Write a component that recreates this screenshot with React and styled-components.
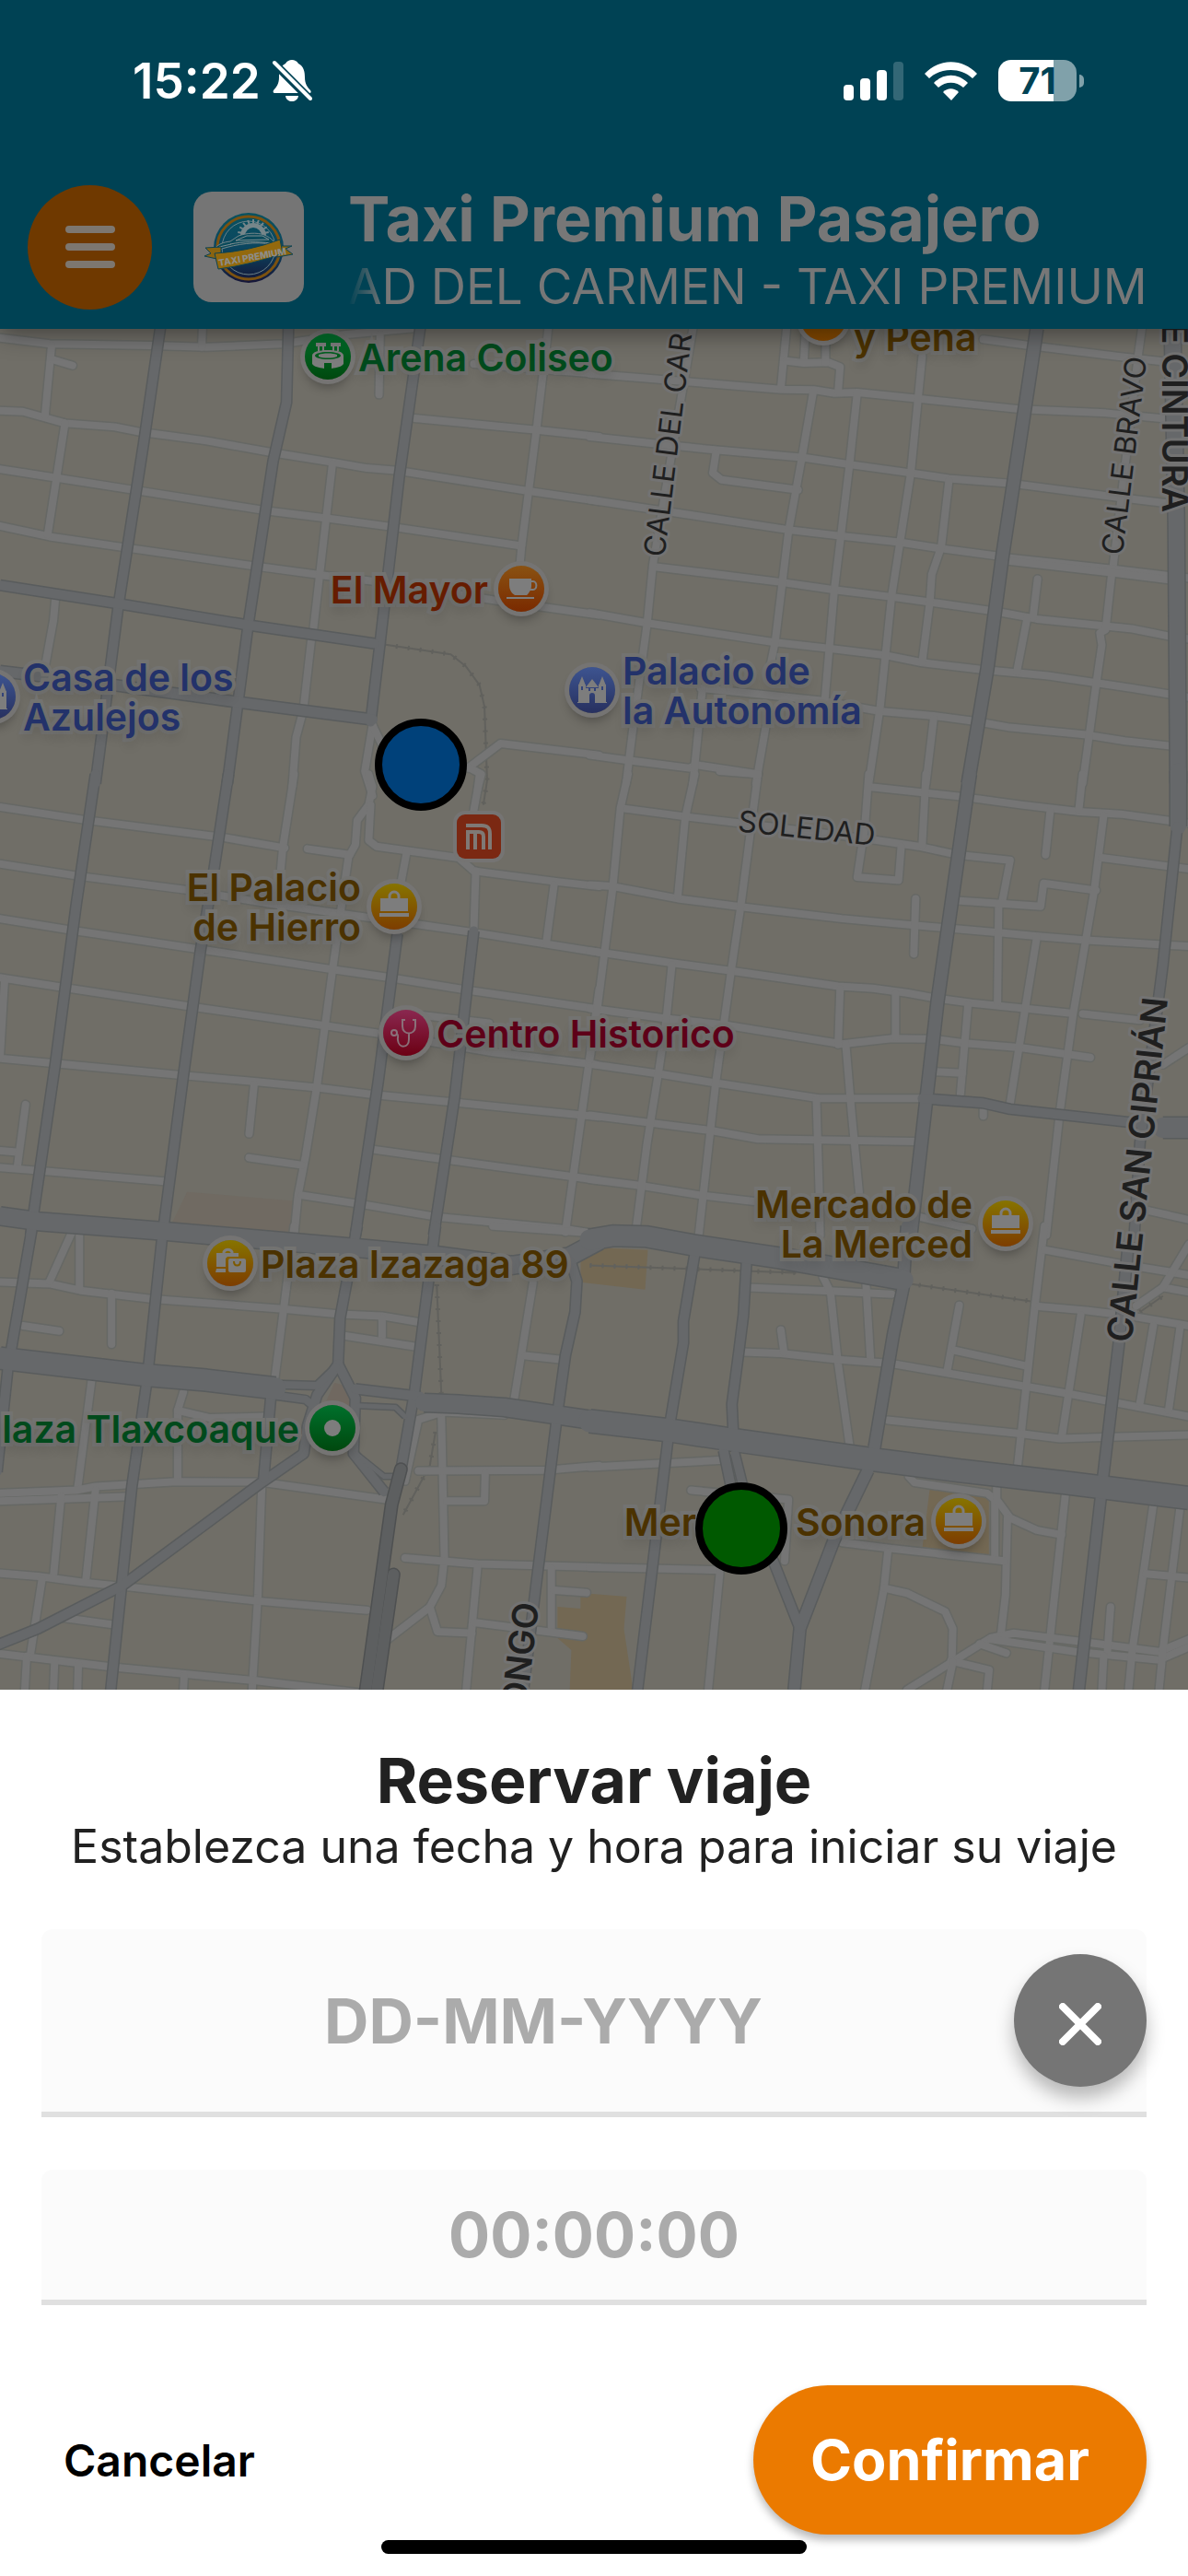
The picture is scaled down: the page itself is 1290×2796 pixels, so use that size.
import React from "react";
import styled, { createGlobalStyle } from "styled-components";

/* ---------- map data ---------- */

// every sheet has its own drawing grid, 1568 units wide for 650px
const toMap = (sheet, points) =>
  points
    .split(" ")
    .map(pair => {
      const [x, y] = pair.split(",").map(Number);
      return `${Math.round((sheet.x + x / 2.412) * 10) / 10},${Math.round((sheet.y + y / 3) * 10) / 10}`;
    })
    .join(" ");

const sheets = [
  {
    x: 0,
    y: 350,
    streets: [
      "0,50 130,70 400,75 540,80 740,70 900,40 1090,18",
      "0,287 60,290 170,328 300,340 370,357 540,385 720,425 880,457 960,474 1040,482 1380,548 1568,582",
      "0,477 350,545 700,613 860,638 1030,666 1365,727",
      "0,662 130,697 340,735 680,795 860,825 1000,845 1300,905 1568,952",
      "135,75 118,300",
      "135,120 190,140",
      "170,328 125,690",
      "145,900 140,970 118,1120",
      "530,20 528,80",
      "870,460 820,1000",
      "815,1030 795,1250",
      "790,1280 775,1350 765,1510",
      "995,40 992,235",
      "1435,20 1405,340 1365,730 1360,800",
      "1085,312 1405,350 1568,372",
      "1240,135 1568,168",
      "975,1310 955,1460 975,1540",
      "975,1310 1010,1400",
      "1225,1450 1310,1370 1568,1408",
      "1230,1450 1260,1470 1250,1520"
    ],
    avenues: [
      ["420,15 375,400 310,920 250,1500", 11],
      ["755,15 750,260 715,450 650,980 595,1500", 11],
      ["1100,15 1045,500 995,1040 970,1300", 11],
      ["0,855 310,915 650,985 980,1045", 11],
      ["0,1135 240,1170 620,1235 975,1292", 12]
    ],
    rails: ["1005,1048 1180,1080 1220,1120 1255,1180 1268,1250 1275,1490 1265,1570"]
  },
  {
    x: 640,
    y: 350,
    streets: [
      "0,167 130,180 500,218 590,220 640,230 700,228 860,248 1130,283 1350,295 1520,315",
      "0,372 290,410 560,440 680,462 840,490 940,508 1110,525 1400,572 1520,590",
      "0,577 520,675 660,695 810,715 915,735 1080,762",
      "170,795 500,845 640,870 790,893 890,910 1060,940 1170,965 1420,997 1520,1022 1568,1030",
      "0,945 150,978 480,1040 620,1060 770,1082 870,1107 1030,1130 1200,1150 1420,1190 1568,1220",
      "290,1190 600,1230 760,1265 900,1280 1010,1298 1100,1318 1300,1342 1400,1362 1520,1378",
      "0,1408 100,1425 260,1450 280,1440 440,1470",
      "330,425 322,490 345,512 545,545",
      "515,20 500,215",
      "565,20 560,130",
      "515,125 560,132 625,130 655,145 650,225",
      "617,60 617,130",
      "585,225 555,440 520,680 485,1040 470,1130",
      "700,230 680,460 640,870 615,1230",
      "870,110 840,490 790,890 760,1250 730,1500",
      "940,515 920,730 895,820 890,910 870,1105",
      "900,1290 880,1500",
      "270,20 165,790 150,980 115,1300 95,1500",
      "295,1190 270,1500",
      "460,1320 435,1500",
      "1030,55 1150,75 1380,110 1520,130",
      "1445,20 1435,110 1370,790 1365,830 1350,1000 1335,1010 1340,1050 1325,1180 1290,1500",
      "1172,835 1160,960",
      "1145,960 1118,1135",
      "1095,766 1380,804 1568,832",
      "1095,776 1380,816 1520,838"
    ],
    avenues: [
      ["1170,20 1140,270 1080,760 1040,1130 990,1500", 14],
      ["1525,20 1535,650 1540,1500", 18]
    ],
    rails: []
  },
  {
    x: 0,
    y: 840,
    streets: [
      "0,107 230,150 580,205 745,240",
      "0,292 210,332 480,375 700,420 900,455 1100,490 1240,515 1568,580",
      "0,470 200,510 540,573 870,635 1010,660 1220,702 1568,765",
      "0,662 180,697 510,758 850,818 1000,845 1290,905 1560,945",
      "1110,785 1280,810",
      "0,925 150,942 480,980 660,1000 830,1020 980,1043 1190,1068 1568,1115",
      "0,1225 45,1230",
      "67,1075 45,1280",
      "0,1280 100,1290 430,1325",
      "770,0 740,240 735,310",
      "805,243 915,262",
      "965,0 975,40 965,100 935,150 930,230 912,270 905,330 870,640 830,1010 800,1240 780,1370 770,1500",
      "970,100 965,215 985,235 1200,272 1240,315 1460,350 1568,365",
      "1065,250 1050,350",
      "1255,0 1250,50 1238,130",
      "1245,315 1240,510",
      "1450,360 1430,545",
      "12,670 0,920",
      "665,1010 652,1170",
      "652,1248 790,1272",
      "790,1370 950,1400 1140,1440 1480,1480 1540,1492",
      "980,1222 1160,1253 1500,1310 1568,1322",
      "1568,700 1540,950 1500,1310 1480,1490"
    ],
    avenues: [
      ["250,0 200,420 145,940 90,1410 80,1500", 11],
      ["598,0 560,310 525,570 480,980 430,1455 425,1500", 11],
      ["1040,520 990,1000 930,1500", 11],
      ["1240,510 1190,1050 1135,1500", 11]
    ],
    rails: []
  },
  {
    x: 640,
    y: 840,
    streets: [
      "90,112 250,138 400,160 600,190 750,215 860,235 960,262 1100,280 1080,410",
      "0,360 60,365 230,405 400,432 660,470 790,485 930,500 1070,515 1180,528 1300,540 1500,555 1568,560",
      "0,575 40,582 220,615 370,640 650,690 740,697 830,712 910,730 1000,745 1260,778",
      "0,762 200,795 350,815 660,878 790,860 900,862 980,875 1130,890 1310,922",
      "0,943 180,975 330,1005 600,1055 870,1055",
      "0,1110 160,1135 320,1160 440,1187 850,1195",
      "0,1318 140,1340 290,1370 430,1390",
      "735,42 970,73 1130,100 1280,122 1390,130 1568,160",
      "100,0 80,110 60,370 20,760 0,930",
      "275,0 250,140 230,400",
      "215,620 200,800 180,970 150,1200 120,1490",
      "440,0 395,430 370,640 330,1000 285,1500",
      "340,-10 440,0",
      "730,0 720,170 700,335 808,345 815,235",
      "880,0 870,230",
      "853,405 848,585",
      "655,700 650,880",
      "800,715 800,855",
      "670,880 685,1100 705,1360",
      "593,1060 600,1340 603,1500",
      "1070,430 1067,740",
      "970,412 1180,430 1188,355 1325,378",
      "1205,120 1193,262",
      "1290,0 1280,115",
      "1345,135 1320,380 1265,780 1230,1100 1195,1500",
      "1340,272 1568,308",
      "1170,530 1140,760 1100,1070",
      "990,750 970,1040",
      "900,968 975,973",
      "1030,1085 1030,1112",
      "1290,780 1440,800",
      "1500,945 1568,890",
      "860,1440 1000,1480",
      "1460,1420 1568,1450"
    ],
    avenues: [
      ["995,0 910,740 840,1500", 14],
      ["1540,-10 1540,170", 18],
      ["1538,170 1500,620 1440,1200 1425,1500", 11],
      ["870,1055 1030,1070 1100,1090 1430,1135", 11],
      ["1500,1150 1600,1150", 23]
    ],
    rails: []
  },
  {
    x: 0,
    y: 1330,
    streets: [
      "0,182 130,188 210,210 400,238 740,270 890,287 1000,293 1095,313",
      "190,15 130,180",
      "208,15 208,205",
      "292,220 292,385",
      "60,325 155,342",
      "770,0 720,490",
      "1000,300 1000,360",
      "905,358 1085,392",
      "1395,185 1345,570",
      "1375,422 1470,435",
      "240,500 203,855",
      "480,540 465,600 465,830",
      "465,600 550,625 690,620",
      "0,870 200,860 250,848 460,832 680,833 1010,890",
      "0,895 340,880",
      "160,880 140,1140",
      "250,860 225,1150",
      "685,850 675,1200 660,1510",
      "0,1130 100,1140 220,1160 340,1175 670,1220 960,1250",
      "110,1150 80,1390",
      "165,1275 300,1298",
      "0,1392 290,1435 670,1480 950,1520",
      "70,1400 65,1510",
      "143,1415 140,1510",
      "205,1425 203,1510",
      "482,1465 480,1510",
      "1155,610 1163,1080 1155,1170 1125,1240 1010,1350",
      "1125,1240 1145,1320 1235,1325",
      "1095,797 1430,795 1568,780",
      "1270,805 1268,895 1170,895",
      "1060,1080 1250,1100 1568,1110",
      "1250,1110 1220,1510",
      "1443,1115 1443,1320",
      "1450,1185 1535,1193",
      "1240,1290 1525,1335",
      "1060,830 1095,630 1160,605 1320,615",
      "1290,0 1540,22"
    ],
    avenues: [
      ["85,0 20,470 -8,800", 11],
      ["425,30 385,500 345,850 290,1510", 11],
      ["935,0 890,300 885,450 830,550 805,650 795,740 690,830 320,1170 100,1310 -20,1370", 11],
      ["885,450 930,560 925,740 1005,865", 11],
      ["1140,0 1085,540 1050,790", 11],
      ["710,540 690,820", 11],
      ["700,515 830,520 880,460", 9],
      ["700,548 800,565 825,590", 9],
      ["930,530 1100,555", 11],
      ["940,585 1035,590 1060,620", 6],
      ["930,740 1005,815 1040,815", 6],
      ["1490,100 1510,180 1505,280 1480,420 1460,600 1400,1200 1370,1510", 11],
      ["0,-32 100,-15 430,17 920,70 1140,95 1340,128 1490,100 1568,48", 20],
      ["0,430 380,485 540,502 720,528", 24],
      ["1110,575 1200,580 1320,590 1568,635", 20]
    ],
    rails: ["1143,190 1155,545", "1140,670 1125,780 1055,940"]
  },
  {
    x: 640,
    y: 1330,
    streets: [
      "415,200 640,212 790,222",
      "610,165 630,215 650,450 680,715",
      "723,190 735,440",
      "400,410 500,415 650,435 790,448 930,478 1250,545 1568,620",
      "500,338 508,410",
      "967,258 935,475",
      "955,405 1140,455",
      "1190,0 1165,260 1120,780",
      "1190,78 1420,130 1568,160",
      "1175,262 1300,275 1400,290 1568,325",
      "1285,290 1235,690",
      "780,632 1120,675 1230,692 1340,688 1568,680",
      "1475,325 1440,575",
      "1545,330 1515,600",
      "1430,260 1500,200 1568,215",
      "1500,200 1568,60",
      "0,785 350,762",
      "265,860 520,890 510,1090",
      "835,815 850,835 1040,870 1060,890 1060,1080",
      "1065,845 1065,890 1100,950 1170,990 1235,1005",
      "1093,950 1088,1200 1075,1340",
      "1245,870 1190,1510",
      "660,1030 790,1050 1085,1090",
      "780,1060 770,1180 720,1510",
      "770,1178 830,1195 930,1255 950,1310 948,1410",
      "0,1110 340,1120",
      "340,1130 310,1510",
      "830,1510 1050,1340 1110,1325 1270,1350 1490,1385 1568,1345",
      "1050,1345 1270,1385 1490,1412 1568,1370",
      "1020,1360 1090,1390",
      "945,1415 1045,1445 1040,1510",
      "950,1420 935,1510",
      "1363,1240 1355,1380",
      "1475,905 1420,1380 1410,1510",
      "1545,915 1500,1380 1490,1510",
      "1455,1132 1568,1145",
      "1345,1400 1340,1510"
    ],
    avenues: [
      ["275,90 245,310 245,380 210,640 165,1100 125,1510", 11],
      ["410,120 402,290 390,410 372,580 375,660", 11],
      ["830,0 825,100 820,200 795,350 745,720", 13],
      ["728,795 640,1020 550,1310 535,1510", 13],
      ["350,730 370,850 480,1090 550,1310", 11],
      ["380,740 400,840 480,1090", 10],
      ["1410,50 1385,380 1345,800 1280,1510", 12],
      ["0,45 60,32 150,35 270,62 500,105 820,175", 23],
      ["0,635 210,665 370,695 740,760 960,795 1240,835 1568,885", 25]
    ],
    rails: ["0,128 540,152", "830,187 1155,245", "1440,280 1500,228"]
  }
];

const tunnels = ["435,1594 425,1632 396,1840", "427,1708 408,1840"];

const patches = [
  { color: "#706a62", points: "203,1293 322,1303 318,1340 184,1332" },
  { color: "#706860", points: "363,1500 380,1505 384,1540 345,1540" },
  { color: "#736853", points: "630,1362 640,1353 703,1356 700,1399 630,1391" },
  { color: "#736853", points: "1009,1615 1073,1625 1073,1687 1001,1678" },
  { color: "#736853", points: "605,1743 630,1745 630,1728 680,1732 677,1767 688,1840 618,1840 620,1790 605,1777" }
];

const streetNames = [
  { name: "CALLE DEL CAR", x: 721, y: 605, angle: -83 },
  { name: "CALLE BRAVO", x: 1218, y: 603, angle: -83 },
  { name: "SOLEDAD", x: 800, y: 902, angle: 6 },
  { name: "CALLE SAN CIPRIÁN", x: 1228, y: 1457, angle: -84, strong: true },
  { name: "E CINTURA", x: 1261, y: 556, angle: 90, strong: true, anchor: "end" },
  { name: "ONGO", x: 585, y: 1740, angle: -83, strong: true, anchor: "end" }
];

const tones = {
  green: { from: "#00702c", to: "#00480e", text: "#004a1c" },
  orange: { from: "#8a5212", to: "#7a2a00", text: "#661c00" },
  blue: { from: "#3d5490", to: "#27305f", text: "#23326a" },
  gold: { from: "#877400", to: "#7d3d00", text: "#4b3200" },
  amber: { from: "#8a5400", to: "#834700", text: "#4b3200" },
  red: { from: "#8a2850", to: "#6c0014", text: "#5e0018" }
};

// top is measured from the edge of the map
const places = [
  { lines: ["Arena Coliseo"], left: 356, top: 30, tone: "green", icon: "stadium" },
  { lines: ["y Peña"], left: 894, top: -3, tone: "amber", icon: "none", low: true },
  { lines: ["El Mayor"], left: 566, top: 282, tone: "orange", icon: "cup", before: true },
  { lines: ["Casa de los", "Azulejos"], left: -8, top: 399, tone: "blue", icon: "castle" },
  { lines: ["Palacio de", "la Autonomía"], left: 643, top: 392, tone: "blue", icon: "castle" },
  { lines: ["El Palacio", "de Hierro"], left: 428, top: 627, tone: "gold", icon: "bag", before: true },
  { lines: ["Centro Historico"], left: 441, top: 764, tone: "red", icon: "stethoscope" },
  { lines: ["Mercado de", "La Merced"], left: 1092, top: 971, tone: "gold", icon: "bag", before: true },
  { lines: ["Plaza Izazaga 89"], left: 250, top: 1014, tone: "gold", icon: "bags" },
  { lines: ["laza Tlaxcoaque"], left: 361, top: 1193, tone: "green", icon: "dot", before: true },
  { lines: ["Mercado Sonora"], left: 1041, top: 1294, tone: "gold", icon: "bag", before: true }
];

/* ---------- icons ---------- */

const placeIcons = {
  none: null,
  dot: <circle cx="25" cy="25" r="9" />,
  stadium: (
    <>
      <path d="M12 10h11v4h-2v5h-2v-5h-3v5h-2v-5h-2zM28 10h11v4h-2v5h-2v-5h-3v5h-2v-5h-2z" />
      <path fillRule="evenodd" d="M25 18c10 0 17 2 17 6v9c-2 3-7 4-13 5v-6h-8v6c-6-1-11-2-13-5v-9c0-4 7-6 17-6zm0 2c-8 0-14 2-14 4s6 4 14 4 14-2 14-4-6-4-14-4z" />
      <path d="M15 23c5-2 15-2 20 0v2c-5 2-15 2-20 0zM18 20l-2 6M32 20l2 6" />
    </>
  ),
  cup: (
    <>
      <path d="M12 14h24v8c0 4-3 8-5 10H18c-4-2-6-7-6-11z" />
      <path d="M35 17h3a3 4 0 0 1 0 9h-4" fill="none" stroke="#7d7d7d" strokeWidth="2" />
      <path d="M9 34h30v2H9z" />
    </>
  ),
  castle: (
    <>
      <path d="M10 20l4-10 4 10zM32 20l4-10 4 10zM18 22l7-9 7 9z" />
      <path fillRule="evenodd" d="M10 19h8v4h14v-4h8v19h1v1H28v-8a3 3 0 0 0-6 0v8H9v-1h1zm3 2v4h2v-4zm22 0v4h2v-4zM21 23v3h2v-3zm6 0v3h2v-3z" />
    </>
  ),
  bag: (
    <>
      <path d="M20 17v-3a5 5 0 0 1 10 0v3" fill="none" stroke="#7d7d7d" strokeWidth="3" />
      <path d="M10 16h30v14H10zM9 32h32v4H9z" />
    </>
  ),
  bags: (
    <>
      <path d="M18 15v-2a5 5 0 0 1 9 0v2" fill="none" stroke="#7d7d7d" strokeWidth="3" />
      <path d="M10 14h24v4H22l-2 2v9H10zM10 31h10v4H9z" />
      <rect x="23" y="20" width="19" height="15" rx="2" />
      <path d="M29 23c0 6 7 6 7 0" fill="none" stroke="#7d5a00" strokeWidth="2" />
    </>
  ),
  stethoscope: (
    <g fill="none" stroke="#8a7079" strokeWidth="2">
      <path d="M24 11h-3v7c0 10 14 10 14 0v-7h-3M28 26v6c0 10-11 10-12 1-1-4 2-4-1-7" />
      <circle cx="12" cy="25" r="3" />
    </g>
  )
};

function BellOff() {
  return (
    <svg width="44" height="48" viewBox="0 0 44 48" fill="#fff" aria-label="Silencio">
      <path d="M22 1c-3 0-5 1-7 4C9 8 8 14 8 20c0 7-3 11-6 14-1 2 0 3 1 3h38c2 0 2-2 1-3-3-3-6-7-6-14 0-6-1-12-7-15-2-3-4-4-7-4zM15 40h14c-1 8-13 8-14 0z" />
      <path d="M1 3l42 42" stroke="#004254" strokeWidth="9" />
      <path d="M3 4l39 39" stroke="#fff" strokeWidth="4" strokeLinecap="round" />
    </svg>
  );
}

function Signal() {
  return (
    <svg width="65" height="42" viewBox="0 0 65 42" fill="#fff" aria-label="Señal">
      <rect x="0" y="25" width="11" height="17" rx="4" />
      <rect x="18" y="18" width="11" height="24" rx="4" />
      <rect x="36" y="9" width="11" height="33" rx="4" />
      <rect x="54" y="0" width="11" height="42" rx="4" opacity=".2" />
    </svg>
  );
}

function Wifi() {
  return (
    <svg width="57" height="42" viewBox="0 0 57 42" fill="#fff" aria-label="Wi-Fi">
      <path d="M0 13C16-4 41-4 57 13l-5 5C39 6 18 6 5 18z" />
      <path d="M10 23c11-11 26-11 37 0l-5 5c-8-7-19-7-27 0z" />
      <path d="M20 33c5-5 12-5 17 0l-8 9z" />
    </svg>
  );
}

function TaxiLogo() {
  const teeth = [-80, -60, -40, -20, 0, 20, 40, 60, 80];
  return (
    <svg width="120" height="120" viewBox="0 0 120 120" role="img" aria-label="Taxi Premium">
      <defs>
        <linearGradient id="logoBg" x1="0" y1="0" x2="0" y2="1">
          <stop offset="0" stopColor="#09525f" />
          <stop offset=".5" stopColor="#0b4660" />
          <stop offset="1" stopColor="#151437" />
        </linearGradient>
      </defs>
      <circle cx="60" cy="61" r="38" fill="url(#logoBg)" />
      <circle cx="60" cy="61" r="34" fill="none" stroke="#7c5210" strokeWidth="3" />
      <circle cx="60" cy="61" r="29" fill="none" stroke="#6a8087" strokeWidth="1" />
      <g fill="#76868a">
        {teeth.map(a => (
          <rect key={a} x="64" y="30" width="2" height="4" transform={`rotate(${a} 65 47)`} />
        ))}
      </g>
      <path d="M51 48a14 14 0 0 1 28 0h-5a9 9 0 0 0-18 0z" fill="#76868a" />
      <path d="M23 62c4-5 9-7 17-8l9-6c8-3 20-4 28-1 4 2 7 3 10 7l-2 3c-18-3-38 0-54 5l-6 4c-3 0-3-2-2-4z" fill="#0a4a5b" stroke="#74868a" strokeWidth="1" />
      <path d="M28 60l13-3M46 53l12-5h17l7 4zM40 57c14-3 29-3 44-1" fill="none" stroke="#7c8c90" strokeWidth="1" />
      <path d="M12 70l7-3-6-6 17-1v14zM107 59l-7 3 8 6-17 3-2-12z" fill="#8a6410" stroke="#0d4352" strokeWidth="1" />
      <path d="M23 67Q60 65 94 52l3 15Q64 79 27 84z" fill="#93690d" stroke="#0d4352" strokeWidth="1" />
      <LogoText x="28" y="81" transform="rotate(-10 28 81)">TAXI PREMIUM</LogoText>
    </svg>
  );
}

/* ---------- map ---------- */

function StreetMap() {
  const streets = sheets.flatMap(s => s.streets.map(p => toMap(s, p)));
  const avenues = sheets.flatMap(s => s.avenues.map(([p, width]) => ({ points: toMap(s, p), width })));
  const rails = sheets.flatMap(s => s.rails.map(p => toMap(s, p)));

  return (
    <MapDrawing viewBox="0 357 1290 1476" preserveAspectRatio="xMinYMin slice">
      {patches.map(p => (
        <polygon key={p.points} points={p.points} fill={p.color} />
      ))}
      <g fill="none" strokeLinejoin="round" strokeLinecap="round">
        {rails.map(p => (
          <g key={p} stroke="#61615d" strokeLinecap="butt">
            <polyline points={p} strokeWidth="2" />
            <polyline points={p} strokeWidth="5" strokeDasharray="2 11" />
          </g>
        ))}
        {streets.map(p => (
          <polyline key={p} points={p} stroke="#666865" strokeWidth="11" />
        ))}
        {streets.map(p => (
          <polyline key={p} points={p} stroke="#757575" strokeWidth="8" />
        ))}
      </g>
      <g fill="none" strokeLinejoin="round">
        {avenues.map(a => (
          <polyline key={a.points} points={a.points} stroke="#595c5d" strokeWidth={a.width + 2} />
        ))}
        {avenues.map(a => (
          <polyline key={a.points} points={a.points} stroke="#66686a" strokeWidth={a.width - 1} strokeLinecap="round" />
        ))}
        {tunnels.map(p => (
          <polyline key={p} points={p} stroke="#4e5051" strokeWidth="15" strokeLinecap="round" />
        ))}
        {tunnels.map(p => (
          <polyline key={p} points={p} stroke="#5d5f60" strokeWidth="12" strokeLinecap="round" />
        ))}
      </g>
      {streetNames.map(s => (
        <StreetName
          key={s.name}
          x={s.x}
          y={s.y}
          textAnchor={s.anchor || "start"}
          transform={`rotate(${s.angle} ${s.x} ${s.y})`}
          $strong={s.strong}
        >
          {s.name}
        </StreetName>
      ))}
    </MapDrawing>
  );
}

function Place({ place }) {
  const tone = tones[place.tone];
  return (
    <PlaceWrapper $left={place.left} $top={place.top} $before={place.before} $low={place.low}>
      <PlaceBadge $tone={tone} $raised={place.low}>
        <svg width="50" height="50" viewBox="0 0 50 50" fill="#7d7d7d" aria-hidden="true">
          {placeIcons[place.icon]}
        </svg>
      </PlaceBadge>
      <PlaceName $color={tone.text} $before={place.before}>
        {place.lines.map(line => (
          <span key={line}>{line}</span>
        ))}
      </PlaceName>
    </PlaceWrapper>
  );
}

/* ---------- page ---------- */

export default function App() {
  return (
    <Screen>
      <GlobalStyle />
      <TopBar>
        <StatusBar>
          <StatusGroup $gap={12}>
            <Clock>15:22</Clock>
            <BellOff />
          </StatusGroup>
          <StatusGroup $gap={23}>
            <Signal />
            <Wifi />
            <Battery>
              <BatteryBody>71</BatteryBody>
              <BatteryTip />
            </Battery>
          </StatusGroup>
        </StatusBar>
        <AppBar>
          <MenuButton aria-label="Menú">
            <svg width="54" height="46" viewBox="0 0 54 46" stroke="#7d7770" strokeWidth="8" strokeLinecap="round">
              <path d="M4 4h46M4 23h46M4 42h46" />
            </svg>
          </MenuButton>
          <LogoBox>
            <TaxiLogo />
          </LogoBox>
          <Heading>
            <AppName>Taxi Premium Pasajero</AppName>
            <Marquee>AD DEL CARMEN - TAXI PREMIUM</Marquee>
          </Heading>
        </AppBar>
      </TopBar>

      <MapArea>
        <StreetMap />
        {places.map(place => (
          <Place key={place.lines.join(" ")} place={place} />
        ))}
        <MetroSign>
          <svg width="48" height="48" viewBox="0 0 48 48" fill="none" stroke="#7f7975" strokeWidth="4" aria-label="Metro">
            <path d="M10 12h17c7 0 9 3 9 9v17M10 19h14c4 0 5 2 5 5v14M12 19v19M20 19v19" />
          </svg>
        </MetroSign>
        <Pin $left={457} $top={473} $color="#00417a" />
        <Pin $left={805} $top={1302} $color="#005900" />
      </MapArea>

      <Sheet>
        <SheetTitle>Reservar viaje</SheetTitle>
        <SheetText>Establezca una fecha y hora para iniciar su viaje</SheetText>
        <Field $height={198}>
          <FieldInput type="text" placeholder="DD-MM-YYYY" aria-label="Fecha" $shift={34} />
          <ClearButton aria-label="Borrar fecha">
            <svg width="46" height="46" viewBox="0 0 46 46" stroke="#fff" strokeWidth="8" strokeLinecap="round">
              <path d="M4 4l38 38M42 4L4 42" />
            </svg>
          </ClearButton>
        </Field>
        <Field $height={141}>
          <FieldInput type="text" placeholder="00:00:00" aria-label="Hora" $shift={0} />
        </Field>
        <Actions>
          <CancelButton>Cancelar</CancelButton>
          <ConfirmButton>Confirmar</ConfirmButton>
        </Actions>
        <HomeIndicator />
      </Sheet>
    </Screen>
  );
}

const GlobalStyle = createGlobalStyle`
  * {
    box-sizing: border-box;
  }
  body {
    margin: 0;
    background: #fff;
    font-family: Inter, "Liberation Sans", sans-serif;
  }
  button, input {
    font-family: inherit;
    border: none;
    padding: 0;
  }
  svg {
    display: block;
    flex-shrink: 0;
  }
`;

const Screen = styled.div`
  display: flex;
  flex-direction: column;
  min-height: 100vh;
`;

const TopBar = styled.header`
  position: relative;
  z-index: 1;
  background: #004254;
  box-shadow: 0 6px 24px rgba(0, 0, 0, 0.4);
`;

const StatusBar = styled.div`
  display: flex;
  justify-content: space-between;
  align-items: center;
  height: 177px;
  padding: 0 113px 2px 144px;
`;

const StatusGroup = styled.div`
  display: flex;
  align-items: center;
  gap: ${props => props.$gap}px;
`;

const Clock = styled.span`
  color: #fff;
  font-size: 53px;
  font-weight: 600;
`;

const Battery = styled.div`
  display: flex;
  align-items: center;
  gap: 3px;
`;

const BatteryBody = styled.div`
  width: 85px;
  height: 45px;
  border-radius: 14px;
  background: linear-gradient(90deg, #fff 71%, #80a1aa 71%);
  color: #004254;
  font-size: 40px;
  font-weight: 700;
  line-height: 45px;
  text-align: center;
`;

const BatteryTip = styled.div`
  width: 5px;
  height: 14px;
  border-radius: 0 5px 5px 0;
  background: #80a1aa;
`;

const AppBar = styled.div`
  display: flex;
  align-items: center;
  height: 180px;
  padding: 2px 40px 0 30px;
`;

const MenuButton = styled.button`
  display: flex;
  align-items: center;
  justify-content: center;
  flex-shrink: 0;
  width: 135px;
  height: 135px;
  border-radius: 50%;
  background: #6f3900;
`;

const LogoBox = styled.div`
  flex-shrink: 0;
  margin: 0 48px 0 45px;
  border-radius: 20px;
  background: #757575;
`;

const LogoText = styled.text`
  font-size: 10px;
  font-weight: 800;
  fill: #8d8d88;
`;

const Heading = styled.div`
  flex: 1;
  min-width: 0;
  padding-top: 8px;
  color: #777;
`;

const AppName = styled.h1`
  margin: 0;
  font-size: 68px;
  font-weight: 700;
  line-height: 76px;
  white-space: nowrap;
`;

const Marquee = styled.p`
  margin: 2px 0 0;
  font-size: 53px;
  line-height: 68px;
  white-space: nowrap;
  overflow: hidden;
  mask-image: linear-gradient(90deg, transparent, #000 40px);
`;

const MapArea = styled.main`
  position: relative;
  flex: 1;
  min-height: 1476px;
  overflow: hidden;
  background: #706e67;
`;

const MapDrawing = styled.svg`
  width: 100%;
  height: 100%;
  position: absolute;
  inset: 0;
`;

const StreetName = styled.text`
  font-size: ${props => (props.$strong ? 38 : 32)}px;
  font-weight: ${props => (props.$strong ? 600 : 400)};
  fill: #1f1f1f;
  stroke: #737373;
  stroke-width: 6px;
  stroke-linejoin: round;
  paint-order: stroke;
`;

const PlaceWrapper = styled.div`
  position: absolute;
  top: ${props => props.$top}px;
  ${props =>
    props.$before
      ? `right: calc(100% - ${props.$left + 25}px);`
      : `left: ${props.$left - 25}px;`}
  display: flex;
  flex-direction: ${props => (props.$before ? "row-reverse" : "row")};
  align-items: ${props => (props.$low ? "flex-end" : "center")};
  gap: ${props => (props.$before ? 11 : 8)}px;
  transform: translateY(-50%);
`;

const PlaceBadge = styled.div`
  width: 50px;
  height: 50px;
  margin-bottom: ${props => (props.$raised ? 18 : 0)}px;
  border-radius: 50%;
  background: linear-gradient(${props => props.$tone.from}, ${props => props.$tone.to});
  box-shadow: 0 0 0 5px #757473, 0 8px 12px rgba(0, 0, 0, 0.3);
`;

const PlaceName = styled.div`
  display: flex;
  flex-direction: column;
  padding-top: 2px;
  color: ${props => props.$color};
  font-size: 41px;
  font-weight: 600;
  line-height: 43px;
  text-align: ${props => (props.$before ? "right" : "left")};
  white-space: nowrap;
  -webkit-text-stroke: 8px #737371;
  paint-order: stroke fill;
  text-shadow: 0 8px 12px rgba(0, 0, 0, 0.15);
`;

const MetroSign = styled.div`
  position: absolute;
  left: 496px;
  top: 527px;
  border-radius: 9px;
  background: #7b2812;
  box-shadow: 0 0 0 4px #757473;
`;

const Pin = styled.div`
  position: absolute;
  left: ${props => props.$left}px;
  top: ${props => props.$top}px;
  width: 100px;
  height: 100px;
  margin: -50px 0 0 -50px;
  border: 8px solid #000;
  border-radius: 50%;
  background: ${props => props.$color};
`;

const Sheet = styled.section`
  padding: 58px 45px 24px;
  background: #fff;
`;

const SheetTitle = styled.h2`
  margin: 0;
  color: #212121;
  font-size: 68px;
  font-weight: 700;
  line-height: 80px;
  text-align: center;
`;

const SheetText = styled.p`
  margin: 0 0 58px;
  color: #212121;
  font-size: 50px;
  line-height: 64px;
  text-align: center;
`;

const Field = styled.div`
  display: flex;
  align-items: center;
  height: ${props => props.$height + 6}px;
  margin-bottom: 57px;
  border-bottom: 6px solid #e0e0e0;
  border-radius: 12px 12px 0 0;
  background: #fbfbfb;
`;

const FieldInput = styled.input`
  flex: 1;
  min-width: 0;
  padding-left: ${props => props.$shift}px;
  background: transparent;
  color: #212121;
  font-size: 67px;
  font-weight: 700;
  text-align: center;
  &::placeholder {
    color: #ababab;
    opacity: 1;
  }
`;

const ClearButton = styled.button`
  display: flex;
  align-items: center;
  justify-content: center;
  width: 144px;
  height: 144px;
  padding-top: 8px;
  border-radius: 50%;
  background: #757575;
  box-shadow: 0 12px 20px rgba(0, 0, 0, 0.28);
`;

const Actions = styled.div`
  display: flex;
  justify-content: space-between;
  align-items: center;
  margin-top: 87px;
`;

const CancelButton = styled.button`
  padding: 0 24px;
  background: transparent;
  color: #000;
  font-size: 48px;
  font-weight: 600;
`;

const ConfirmButton = styled.button`
  height: 162px;
  padding: 0 62px;
  border-radius: 81px;
  background: #eb7a00;
  box-shadow: 0 6px 10px rgba(0, 0, 0, 0.28);
  color: #fff;
  font-size: 61px;
  font-weight: 700;
`;

const HomeIndicator = styled.div`
  width: 462px;
  height: 15px;
  margin: 6px auto 0;
  border-radius: 8px;
  background: #000;
`;
